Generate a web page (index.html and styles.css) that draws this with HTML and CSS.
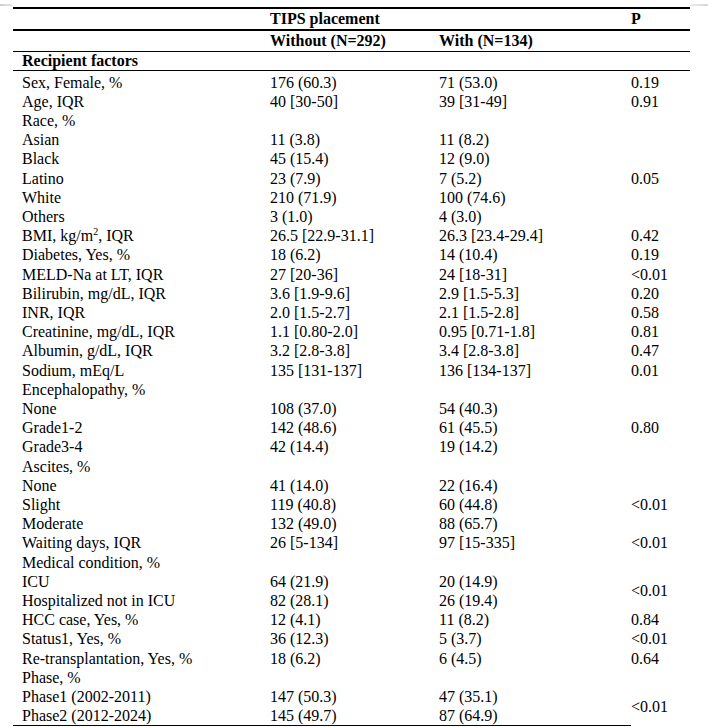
FILE: index.html
```html
<!DOCTYPE html>
<html>
<head>
<meta charset="utf-8">
<link rel="stylesheet" href="styles.css">
</head>
<body>
<div class="edge"></div>
<table class="tbl">
  <colgroup>
    <col class="c1"><col class="c2"><col class="c3"><col class="c4">
  </colgroup>
  <thead>
    <tr class="h1">
      <th></th>
      <th colspan="2">TIPS placement</th>
      <th>P</th>
    </tr>
    <tr class="h2">
      <th></th>
      <th>Without (N=292)</th>
      <th>With (N=134)</th>
      <th></th>
    </tr>
    <tr class="h3">
      <th colspan="4" class="lab">Recipient factors</th>
    </tr>
  </thead>
  <tbody>
    <tr class="first"><td class="lab">Sex, Female, %</td><td>176 (60.3)</td><td>71 (53.0)</td><td>0.19</td></tr>
    <tr><td class="lab">Age, IQR</td><td>40 [30-50]</td><td>39 [31-49]</td><td>0.91</td></tr>
    <tr><td class="lab">Race, %</td><td></td><td></td><td></td></tr>
    <tr><td class="lab">Asian</td><td>11 (3.8)</td><td>11 (8.2)</td><td rowspan="5">0.05</td></tr>
    <tr><td class="lab">Black</td><td>45 (15.4)</td><td>12 (9.0)</td></tr>
    <tr><td class="lab">Latino</td><td>23 (7.9)</td><td>7 (5.2)</td></tr>
    <tr><td class="lab">White</td><td>210 (71.9)</td><td>100 (74.6)</td></tr>
    <tr><td class="lab">Others</td><td>3 (1.0)</td><td>4 (3.0)</td></tr>
    <tr><td class="lab">BMI, kg/m<sup class="sup">2</sup>, IQR</td><td>26.5 [22.9-31.1]</td><td>26.3 [23.4-29.4]</td><td>0.42</td></tr>
    <tr><td class="lab">Diabetes, Yes, %</td><td>18 (6.2)</td><td>14 (10.4)</td><td>0.19</td></tr>
    <tr><td class="lab">MELD-Na at LT, IQR</td><td>27 [20-36]</td><td>24 [18-31]</td><td>&lt;0.01</td></tr>
    <tr><td class="lab">Bilirubin, mg/dL, IQR</td><td>3.6 [1.9-9.6]</td><td>2.9 [1.5-5.3]</td><td>0.20</td></tr>
    <tr><td class="lab">INR, IQR</td><td>2.0 [1.5-2.7]</td><td>2.1 [1.5-2.8]</td><td>0.58</td></tr>
    <tr><td class="lab">Creatinine, mg/dL, IQR</td><td>1.1 [0.80-2.0]</td><td>0.95 [0.71-1.8]</td><td>0.81</td></tr>
    <tr><td class="lab">Albumin, g/dL, IQR</td><td>3.2 [2.8-3.8]</td><td>3.4 [2.8-3.8]</td><td>0.47</td></tr>
    <tr><td class="lab">Sodium, mEq/L</td><td>135 [131-137]</td><td>136 [134-137]</td><td>0.01</td></tr>
    <tr><td class="lab">Encephalopathy, %</td><td></td><td></td><td></td></tr>
    <tr><td class="lab">None</td><td>108 (37.0)</td><td>54 (40.3)</td><td rowspan="3">0.80</td></tr>
    <tr><td class="lab">Grade1-2</td><td>142 (48.6)</td><td>61 (45.5)</td></tr>
    <tr><td class="lab">Grade3-4</td><td>42 (14.4)</td><td>19 (14.2)</td></tr>
    <tr><td class="lab">Ascites, %</td><td></td><td></td><td></td></tr>
    <tr><td class="lab">None</td><td>41 (14.0)</td><td>22 (16.4)</td><td rowspan="3">&lt;0.01</td></tr>
    <tr><td class="lab">Slight</td><td>119 (40.8)</td><td>60 (44.8)</td></tr>
    <tr><td class="lab">Moderate</td><td>132 (49.0)</td><td>88 (65.7)</td></tr>
    <tr><td class="lab">Waiting days, IQR</td><td>26 [5-134]</td><td>97 [15-335]</td><td>&lt;0.01</td></tr>
    <tr><td class="lab">Medical condition, %</td><td></td><td></td><td></td></tr>
    <tr><td class="lab">ICU</td><td>64 (21.9)</td><td>20 (14.9)</td><td rowspan="2">&lt;0.01</td></tr>
    <tr><td class="lab">Hospitalized not in ICU</td><td>82 (28.1)</td><td>26 (19.4)</td></tr>
    <tr><td class="lab">HCC case, Yes, %</td><td>12 (4.1)</td><td>11 (8.2)</td><td>0.84</td></tr>
    <tr><td class="lab">Status1, Yes, %</td><td>36 (12.3)</td><td>5 (3.7)</td><td>&lt;0.01</td></tr>
    <tr><td class="lab">Re-transplantation, Yes, %</td><td>18 (6.2)</td><td>6 (4.5)</td><td>0.64</td></tr>
    <tr><td class="lab">Phase, %</td><td></td><td></td><td></td></tr>
    <tr><td class="lab">Phase1 (2002-2011)</td><td>147 (50.3)</td><td>47 (35.1)</td><td rowspan="2">&lt;0.01</td></tr>
    <tr class="last"><td class="lab">Phase2 (2012-2024)</td><td>145 (49.7)</td><td>87 (64.9)</td></tr>
  </tbody>
</table>
</body>
</html>
```
FILE: styles.css
```css
html, body {
  margin: 0;
  padding: 0;
  background: #fff;
}
body {
  font-family: "Liberation Serif", "Times New Roman", serif;
  font-size: 16px;
  color: #000;
  overflow: hidden;
}
.edge {
  margin-top: 4px;
  height: 2px;
  background: linear-gradient(to right, #cfcfcf 0, #e6e6e6 12px, #fff 13px, #fff 690px, #ececec 691px, #d6d6d6 100%);
}
.tbl {
  margin: 1px 0 0 13px;
  width: 677px;
  table-layout: fixed;
  border-collapse: separate;
  border-spacing: 0;
}
.c1 { width: 257px; }
.c2 { width: 169px; }
.c3 { width: 192px; }
.c4 { width: 59px; }
.tbl th, .tbl td {
  padding: 0;
  text-align: left;
  vertical-align: middle;
  white-space: nowrap;
  line-height: 19.2px;
}
.tbl th {
  font-weight: bold;
}
.tbl .lab {
  padding-left: 9px;
}
.h1 th {
  border-top: 2px solid #000;
  border-bottom: 2px solid #000;
  line-height: 20px;
}
.h2 th {
  border-bottom: 1px solid #000;
  line-height: 20px;
}
.h3 th {
  border-bottom: 1px solid #000;
  line-height: 18px;
}
.first td {
  padding-top: 1.5px;
}
.first td.lab {
  padding-top: 1.5px;
}
.last td {
  border-bottom: 1px solid #000;
}
.tbl td[rowspan="2"] {
  border-bottom: 0;
}
.sup {
  font-size: 10px;
  line-height: 0;
  vertical-align: 6px;
}
```
